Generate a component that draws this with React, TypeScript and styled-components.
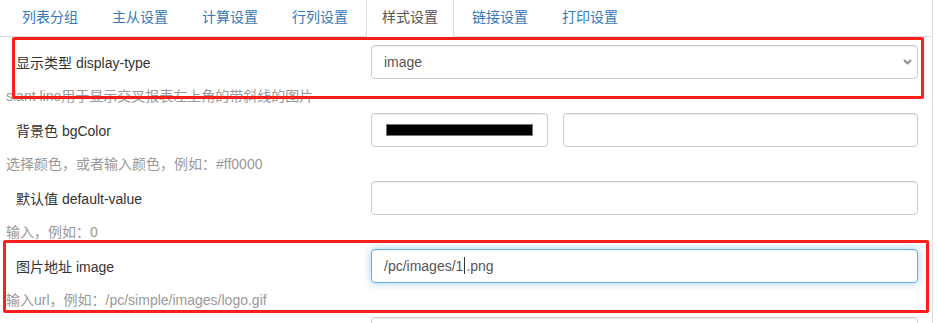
import React from 'react';
import styled, {createGlobalStyle} from "styled-components";

const GlobalStyle = createGlobalStyle`
  html, body {
    margin: 0;
    padding: 0;
    background: #fff;
  }
  body {
    font-family: "Liberation Sans", "Noto Sans CJK SC", Arial, sans-serif;
    font-size: 14px;
    color: #333;
  }
  * {
    box-sizing: border-box;
  }
`

const tabs = ["列表分组", "主从设置", "计算设置", "行列设置", "样式设置", "链接设置", "打印设置"]
const activeTab = "样式设置"

export default function App() {
    return (
        <PageStyled>
            <GlobalStyle/>
            <PanelStyled>
                <TabBarStyled>
                    {tabs.map(t => (
                        <TabStyled key={t} $active={t === activeTab}>{t}</TabStyled>
                    ))}
                </TabBarStyled>

                <FormStyled>
                    <GroupStyled>
                        <FieldRowStyled>
                            <LabelStyled>显示类型 display-type</LabelStyled>
                            <SelectWrapStyled>
                                <SelectStyled defaultValue="image">
                                    <option value="image">image</option>
                                    <option value="text">text</option>
                                    <option value="slant">slant line</option>
                                </SelectStyled>
                                <ChevronStyled width="9" height="6" viewBox="0 0 9 6">
                                    <path d="M1 1 L4.5 4.5 L8 1" fill="none" stroke="#8a8a8a" strokeWidth="1.8"/>
                                </ChevronStyled>
                            </SelectWrapStyled>
                        </FieldRowStyled>
                        <HelpStyled>slant line用于显示交叉报表左上角的带斜线的图片</HelpStyled>
                    </GroupStyled>

                    <GroupStyled>
                        <FieldRowStyled>
                            <LabelStyled>背景色 bgColor</LabelStyled>
                            <ColorControlsStyled>
                                <ColorBoxStyled>
                                    <SwatchStyled style={{background: "#000000"}}/>
                                </ColorBoxStyled>
                                <InputStyled/>
                            </ColorControlsStyled>
                        </FieldRowStyled>
                        <HelpStyled>选择颜色，或者输入颜色，例如：#ff0000</HelpStyled>
                    </GroupStyled>

                    <GroupStyled>
                        <FieldRowStyled>
                            <LabelStyled>默认值 default-value</LabelStyled>
                            <InputStyled/>
                        </FieldRowStyled>
                        <HelpStyled>输入，例如：0</HelpStyled>
                    </GroupStyled>

                    <GroupStyled>
                        <FieldRowStyled>
                            <LabelStyled>图片地址 image</LabelStyled>
                            <FocusedBoxStyled>
                                /pc/images/1<CaretStyled/>.png
                            </FocusedBoxStyled>
                        </FieldRowStyled>
                        <HelpStyled>输入url，例如：/pc/simple/images/logo.gif</HelpStyled>
                    </GroupStyled>

                    {/* next row, only its input top shows at the bottom edge */}
                    <GroupStyled>
                        <FieldRowStyled>
                            <LabelStyled/>
                            <InputStyled/>
                        </FieldRowStyled>
                    </GroupStyled>
                </FormStyled>
            </PanelStyled>

            {/* red annotation frames drawn over the screenshot */}
            <MarkStyled $left={12} $top={37} $width={912} $height={62}/>
            <MarkStyled $left={3} $top={240} $width={926} $height={73}/>
        </PageStyled>
    );
}

const PageStyled = styled.div`
  position: relative;
  width: 937px;
  height: 323px;
  overflow: hidden;
  background: #fff;
`

const PanelStyled = styled.div`
  width: 933px;
  height: 100%;
  border-right: 1px solid #ddd;
`

const TabBarStyled = styled.div`
  display: flex;
  height: 37px;
  padding-left: 6px;
  border-bottom: 1px solid #ddd;
`

const TabStyled = styled.div<{ $active?: boolean }>`
  height: 37px;
  margin-right: 2px;
  padding: 0 15px;
  line-height: 34px;
  white-space: nowrap;
  border: 1px solid transparent;
  border-top: none;
  border-bottom: none;
  color: ${p => p.$active ? "#555" : "#337ab7"};
  background: ${p => p.$active ? "#fff" : "transparent"};
  border-left-color: ${p => p.$active ? "#ddd" : "transparent"};
  border-right-color: ${p => p.$active ? "#ddd" : "transparent"};
  cursor: pointer;
`

const FormStyled = styled.div`
  padding: 8px 0 0 6px;
`

const GroupStyled = styled.div`
  display: flex;
  flex-direction: column;
`

const FieldRowStyled = styled.div`
  display: flex;
  align-items: center;
  height: 34px;
`

const LabelStyled = styled.label`
  width: 365px;
  flex-shrink: 0;
  padding-left: 10px;
  color: #333;
  white-space: nowrap;
`

const HelpStyled = styled.div`
  margin: 7px 0;
  line-height: 20px;
  color: #999;
  white-space: nowrap;
`

const controlBase = `
  height: 34px;
  padding: 6px 12px;
  font-family: "Liberation Sans", "Noto Sans CJK SC", Arial, sans-serif;
  font-size: 14px;
  line-height: 20px;
  color: #555;
  background: #fff;
  border: 1px solid #ccc;
  border-radius: 4px;
  box-shadow: inset 0 1px 1px rgba(0, 0, 0, .075);
  outline: none;
`

const InputStyled = styled.input`
  ${controlBase};
  width: 355px;
  flex: 1;
  max-width: 547px;
`

const SelectWrapStyled = styled.div`
  position: relative;
  width: 547px;
`

const SelectStyled = styled.select`
  ${controlBase};
  width: 100%;
  appearance: none;
  -webkit-appearance: none;
`

const ChevronStyled = styled.svg`
  position: absolute;
  right: 6px;
  top: 14px;
  pointer-events: none;
`

const ColorControlsStyled = styled.div`
  display: flex;
  gap: 15px;
  width: 547px;
`

const ColorBoxStyled = styled.div`
  ${controlBase};
  width: 177px;
  flex-shrink: 0;
  display: flex;
  align-items: center;
  padding: 0 14px;
`

const SwatchStyled = styled.span`
  display: block;
  width: 100%;
  height: 12px;
  border: 1px solid #777;
`

const FocusedBoxStyled = styled.div`
  ${controlBase};
  width: 547px;
  border-color: #66afe9;
  box-shadow: inset 0 1px 1px rgba(0, 0, 0, .075), 0 0 8px rgba(102, 175, 233, .6);
  white-space: nowrap;
`

const CaretStyled = styled.span`
  display: inline-block;
  width: 1px;
  height: 17px;
  margin: 0 1px -3px;
  background: #333;
`

const MarkStyled = styled.div<{ $left: number, $top: number, $width: number, $height: number }>`
  position: absolute;
  left: ${p => p.$left}px;
  top: ${p => p.$top}px;
  width: ${p => p.$width}px;
  height: ${p => p.$height}px;
  border: 3px solid #ff1f1a;
  border-radius: 2px;
  pointer-events: none;
`
